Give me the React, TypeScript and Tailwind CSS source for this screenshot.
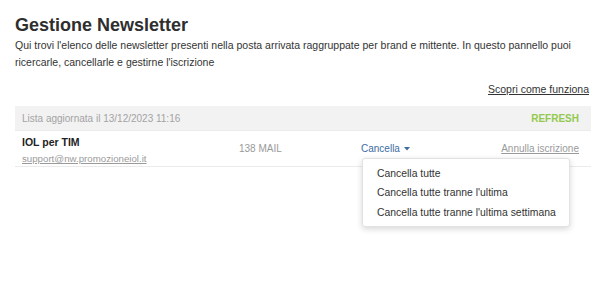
import React from 'react';

export default function App() {
  return (
    <div className="w-[610px] h-[283px] bg-white text-[#333] font-['Liberation_Sans',Arial,sans-serif] pl-[15px] pt-[14px]">
      <div className="w-[576px]">
        <h1 className="text-[18px] font-bold leading-[22px] text-[#2e2e2e]">Gestione Newsletter</h1>
        <p className="text-[10.5px] leading-[17px] mt-[1px]">
          Qui trovi l'elenco delle newsletter presenti nella posta arrivata raggruppate per brand e mittente. In questo pannello puoi ricercarle, cancellarle e gestirne l'iscrizione
        </p>

        <div className="flex justify-end mt-[10px] pr-[2px] leading-[17px]">
          <a className="text-[10.5px] underline text-[#333]">Scopri come funziona</a>
        </div>

        <div className="mt-[8px]">
          <div className="flex items-center justify-between bg-[#f2f2f2] h-[24px] pl-[7px] pr-[12px]">
            <span className="text-[10px] text-[#a3a3a3]">Lista aggiornata il 13/12/2023 11:16</span>
            <span className="text-[10px] font-bold text-[#93c94f]">REFRESH</span>
          </div>

          <div className="relative flex items-center h-[37px] pl-[7px] pr-[12px] border-t border-b border-[#ebebeb]">
            <div className="self-start pt-[4px] w-[217px]">
              <div className="text-[10.5px] font-bold leading-[14px] text-[#222]">IOL per TIM</div>
              <div className="text-[9.7px] leading-[14px] mt-[3px] text-[#9a9a9a] underline">support@nw.promozioneiol.it</div>
            </div>
            <div className="w-[122px] text-[10px] text-[#9a9a9a]">138 MAIL</div>
            <div className="flex items-center gap-[4px] text-[10px] text-[#3d6c9f]">
              Cancella
              <svg width="6" height="4" viewBox="0 0 6 4"><path d="M0 0h6L3 3.5z" fill="#3d6c9f" /></svg>
            </div>
            <div className="ml-auto text-[10px] text-[#9a9a9a] underline">Annulla iscrizione</div>

            <div className="absolute left-[347px] top-[27px] w-[208px] bg-white rounded-[3px] border border-[#e2e2e2] shadow-[0_2px_6px_rgba(0,0,0,0.16)] pt-[5px] pb-[3px] text-[10.4px] text-[#333] whitespace-nowrap">
              <div className="px-[14px] h-[19.5px] flex items-center">Cancella tutte</div>
              <div className="px-[14px] h-[19.5px] flex items-center">Cancella tutte tranne l'ultima</div>
              <div className="px-[14px] h-[19.5px] flex items-center">Cancella tutte tranne l'ultima settimana</div>
            </div>
          </div>
        </div>
      </div>
    </div>
  );
}
